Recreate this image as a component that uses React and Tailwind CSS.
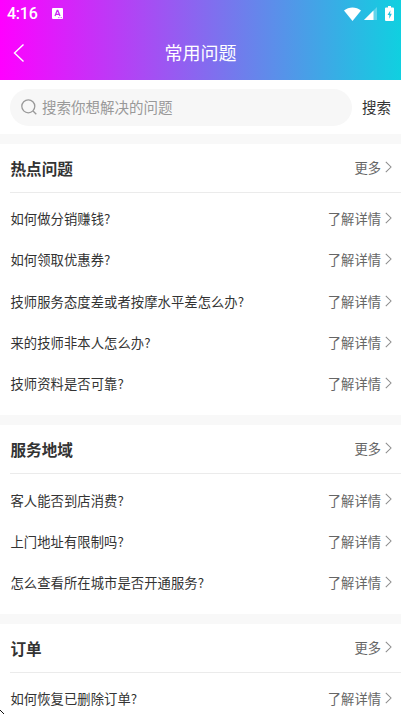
const sections = [
  {
    title: "热点问题",
    items: [
      "如何做分销赚钱?",
      "如何领取优惠券?",
      "技师服务态度差或者按摩水平差怎么办?",
      "来的技师非本人怎么办?",
      "技师资料是否可靠?",
    ],
  },
  {
    title: "服务地域",
    items: ["客人能否到店消费?", "上门地址有限制吗?", "怎么查看所在城市是否开通服务?"],
  },
  {
    title: "订单",
    items: ["如何恢复已删除订单?"],
  },
];

function Arrow() {
  return (
    <svg className="w-[7px] h-[12px] -mt-[2px]" viewBox="0 0 7 12" fill="none" stroke="#8c8c8c" strokeWidth="1.05">
      <path d="M0.8 0.9 6 6 0.8 11.1" />
    </svg>
  );
}

function StatusBar() {
  return (
    <div className="h-[27px] flex items-center pl-[7px] pr-[7px]">
      <span className="w-[45px] font-[Roboto] font-medium text-[16px] leading-[27px] tracking-[-0.25px]">4:16</span>
      <svg className="w-[11px] h-[11px]" viewBox="0 0 11 11">
        <rect width="11" height="11" rx="1" fill="#fff" />
        <path d="M3 8 5.2 2.5h.6L8 8M3.9 6.3h3.2" fill="none" stroke="#cb2af5" strokeWidth="1.3" />
        <path d="M6 9.6h4" stroke="#cb2af5" strokeWidth=".7" strokeDasharray="1 .5" />
      </svg>
      <div className="flex-1" />
      <svg className="w-[17px] h-[14px] mr-[3px]" viewBox="0 0 17 14" fill="#fff">
        <path d="M8.5 14 0 3.5C4.8-.5 12.2-.5 17 3.5z" />
      </svg>
      <svg className="w-[13px] h-[13px] mr-[8px]" viewBox="0 0 13 13" fill="#fff">
        <path d="M13 0v13H0z" opacity=".3" />
        <path d="M9.5 3.5V13H0z" />
      </svg>
      <svg className="w-[9px] h-[15px]" viewBox="0 0 9 15">
        <path d="M3 0h3v1.5h2q1 0 1 1V14q0 1-1 1H1q-1 0-1-1V2.5q0-1 1-1h2z" fill="#fff" />
        <path d="M5.5 4.3 2.5 9h1.8v3.7L6.8 7.8H5z" fill="#1bc4e1" />
      </svg>
    </div>
  );
}

function Section({ title, items }) {
  return (
    <section className="bg-white mb-[10px] pb-[10.4px]">
      <div className="ml-[10px] h-[49px] border-b border-[#ebebeb] flex items-center justify-between pr-[9px]">
        <h2 className="text-[15.6px] font-bold text-[#333] pl-[0.5px] pt-px">{title}</h2>
        <span className="flex items-center gap-[4px] text-[13.3px] text-[#666]">
          更多
          <Arrow />
        </span>
      </div>
      <ul className="pt-[5.4px]">
        {items.map((q) => (
          <li key={q} className="h-[41.33px] pl-[10.5px] pr-[9px] flex items-center justify-between text-[13.3px] text-[#333]">
            <span className="tracking-[0.07px]">{q}</span>
            <span className="flex items-center gap-[4px] text-[#666]">
              了解详情
              <Arrow />
            </span>
          </li>
        ))}
      </ul>
    </section>
  );
}

export default function App() {
  return (
    <div className="relative h-[714px] overflow-hidden bg-[#f8f8f8] font-['Noto_Sans_CJK_SC',sans-serif]">
      <header className="h-[80px] text-white bg-[linear-gradient(90deg,#ff00ff,#10d0e0)]">
        <StatusBar />
        <div className="h-[52px] grid grid-cols-[1fr_auto_1fr] items-center">
          <svg className="w-[12px] h-[20px] ml-[13px]" viewBox="0 0 12 20" fill="none" stroke="#fff" strokeWidth="1.4">
            <path d="M10.5 1.5 1.5 10l9 8.5" />
          </svg>
          <h1 className="text-[18px] pb-[2px]">常用问题</h1>
        </div>
      </header>

      <div className="h-[54px] mb-[10px] bg-white flex items-center pl-[10px] pr-[10px]">
        <div className="flex-1 h-[37px] mr-[10px] rounded-full bg-[#f7f7f7] flex items-center pl-[11px]">
          <svg className="w-[16px] h-[16px] mr-[5px]" viewBox="0 0 16 16" fill="none" stroke="#999" strokeWidth="1.3">
            <circle cx="7.3" cy="7.3" r="6.5" />
            <path d="m12 12 3.3 3.3" />
          </svg>
          <span className="text-[14.5px] text-[#999]">搜索你想解决的问题</span>
        </div>
        <span className="text-[14.5px] text-[#333]">搜索</span>
      </div>

      {sections.map((s) => (
        <Section key={s.title} {...s} />
      ))}

      <svg className="absolute left-0 bottom-0 w-[4px] h-[4px]" viewBox="0 0 4 4" fill="#111">
        <path d="M0 0h1v1H0zM1 1h1v1H1zM2 2h1v1H2zM3 3h1v1H3z" />
      </svg>
    </div>
  );
}
